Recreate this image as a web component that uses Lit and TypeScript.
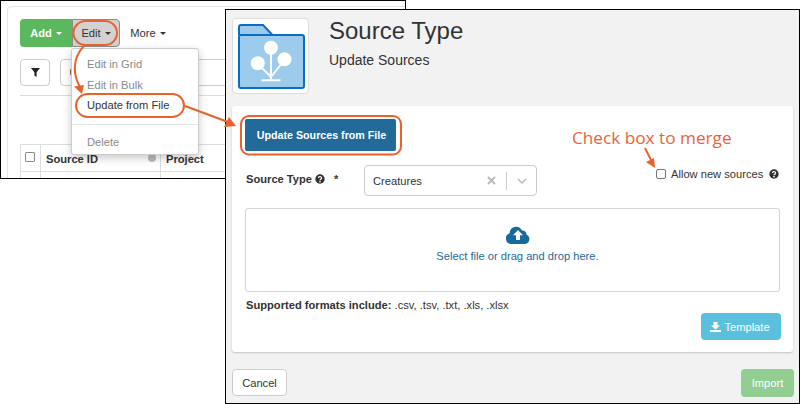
import { LitElement, html, css, svg } from "lit";
import { customElement } from "lit/decorators.js";

const caret = html`<span class="caret"></span>`;
const qmark = html`<svg class="q" viewBox="0 0 12 12"><circle cx="6" cy="6" r="5.6" fill="#2f2f2f"/><path d="M4.1 4.8a1.9 1.7 0 1 1 2.9 1.4c-.7.4-1 .6-1 1.4" fill="none" stroke="#fff" stroke-width="1.5"/><rect x="5.1" y="8.4" width="1.8" height="1.6" fill="#fff"/></svg>`;

@customElement("app-root")
export class AppRoot extends LitElement {
  static styles = css`
    :host { display: block; position: relative; width: 800px; height: 404px; overflow: hidden; background: #fff;
      font-family: "Liberation Sans", Arial, sans-serif; font-size: 11.15px; color: #333; }
    * { box-sizing: border-box; }
    .win { position: absolute; border: 1px solid #000; overflow: hidden; }
    .back { left: 0; top: 0; width: 406px; height: 179px; background: #fff; padding: 5px 0 0 6px; }
    .bcard { width: 420px; height: 190px; border: 1px solid #e4e4e4; border-radius: 4px; padding: 12px 12px 0 12px; background: #fff; }
    .toolbar { display: flex; align-items: stretch; height: 28px; }
    .btn { display: flex; align-items: center; justify-content: center; gap: 4px; border-radius: 4px; font-weight: 400; }
    .add { width: 52px; background: #5cb85c; color: #fff; font-weight: 700; border-radius: 4px 0 0 4px; }
    .edit { width: 48px; background: #d2d2d2; border: 1px solid #8c8c8c; border-radius: 0 4px 4px 0; color: #333; }
    .more { width: 54px; margin-left: 1px; color: #333; }
    .caret { display: inline-block; width: 0; height: 0; border-left: 3.5px solid transparent; border-right: 3.5px solid transparent; border-top: 3.5px solid currentColor; }
    .filters { display: flex; gap: 10px; margin-top: 12px; }
    .fbtn { width: 30px; height: 27px; border: 1px solid #ccc; border-radius: 4px; display: flex; align-items: center; justify-content: center; }
    .search { width: 340px; height: 27px; border: 1px solid #ccc; border-radius: 4px 0 0 4px; padding: 8px 0 0 9px; }
    .search span { display: block; width: 4px; height: 8px; border: 1.5px solid #7a5a3a; border-radius: 50%; }
    .rule { height: 1px; background: #ddd; margin-top: 9px; width: 390px; }
    .tbl { margin-top: 48px; display: grid; grid-template-columns: 20px 120px 120px; border-top: 1px solid #ddd; border-left: 1px solid #ddd; width: 400px; }
    .th { height: 27px; border-right: 1px solid #ddd; border-bottom: 1px solid #ddd; font-weight: 700; display: flex; align-items: center; padding-left: 5px; padding-top: 2px; font-size: 11.15px; color: #333; position: relative; }
    .th.c { padding-left: 4px; padding-top: 0; padding-bottom: 2px; }
    .cb { width: 10px; height: 10px; border: 1px solid #8a8a8a; border-radius: 1px; background: #fff; }
    .th .dot { position: absolute; right: 4px; top: 9px; width: 8px; height: 8px; border-radius: 50%; background: #bbb; }
    .td { height: 10px; border-right: 1px solid #ddd; }
    .menu { position: absolute; left: 71px; top: 48px; width: 128px; height: 107px; background: #fff; border: 1px solid #ccc; border-radius: 3px;
      box-shadow: 0 3px 8px rgba(0,0,0,.22); padding-top: 5px; }
    .mi { height: 20.5px; line-height: 20.5px; padding-left: 15px; color: #8a8a8a; }
    .mi.on { color: #333; }
    .sep { height: 1px; background: #e5e5e5; margin: 8px 0 7px; }

    .front { left: 225px; top: 9px; width: 575px; height: 395px; background: #f2f2f2; display: flex; flex-direction: column; padding: 8px 6px 0 6px; }
    .head { display: flex; height: 76px; }
    .logo { width: 77px; height: 76px; background: #fff; border: 1px solid #ddd; border-radius: 4px; display: flex; align-items: center; justify-content: center; }
    .titles { margin-left: 20px; margin-top: -1px; }
    h1 { margin: 0; font-weight: 400; font-size: 24px; line-height: 28px; color: #333; }
    .sub { font-size: 14px; line-height: 16px; margin-top: 7px; color: #333; }
    .card { margin-top: 12px; width: 561px; height: 246px; background: #fff; border-radius: 3px; box-shadow: 0 1px 2px rgba(0,0,0,.2); padding: 13px 13px 0 13px; position: relative; }
    .update { width: 151px; height: 32px; padding-left: 2px; background: #226a97; color: #fff; font-weight: 700; font-size: 10.7px; display: flex; align-items: center; justify-content: center; border-radius: 2px; }
    .row { display: flex; align-items: center; margin-top: 14px; height: 31px; }
    .lbl { width: 119px; padding-left: 1px; font-weight: 700; display: flex; align-items: center; gap: 3px; margin-top: -3px; }
    .q { width: 10px; height: 10px; }
    .star { margin-left: 6px; }
    .select { width: 173px; height: 31px; border: 1px solid #ccc; border-radius: 4px; display: flex; align-items: center; padding-left: 8px; }
    .select .v { flex: 1; }
    .x { margin-right: 10px; width: 9px; height: 9px; }
    .bar { width: 1px; height: 18px; background: #ccc; }
    .chev { width: 10px; height: 6px; margin: 0 9px 0 10px; }
    .allow { position: absolute; left: 424px; top: 62px; display: flex; align-items: center; }
    .allow .box { width: 10px; height: 10px; border: 1px solid #777; border-radius: 2px; background: #fff; margin-right: 5px; }
    .allow .q { margin-left: 6px; }
    .drop { margin-top: 12px; height: 84px; width: 535px; border: 1px solid #d4d4d4; border-radius: 3px; display: flex; flex-direction: column; align-items: center; padding: 17px 0 0 10px; color: #226a97; }
    .drop svg { width: 24px; height: 18px; }
    .drop div { margin-top: 6px; }
    .formats { margin-top: 7px; padding-left: 1px; }
    .tpl { position: absolute; right: 12px; top: 207px; width: 80px; height: 27px; background: #5bc0de; color: #fff; border-radius: 4px; display: flex; align-items: center; justify-content: center; gap: 3px; padding-right: 2px; }
    .foot { display: flex; justify-content: space-between; margin-top: 17px; width: 562px; }
    .cancel { width: 55px; height: 27px; border: 1px solid #ccc; border-radius: 4px; background: #fff; }
    .import { width: 53px; height: 28px; background: #92cd92; color: #fff; border-radius: 4px; }
    .ann { position: absolute; left: 0; top: 0; pointer-events: none; }
    .note { position: absolute; left: 572px; top: 126px; font-family: "Open Sans", sans-serif; font-size: 17.2px; line-height: 24px; color: #e8643a; white-space: nowrap; }
  `;

  render() {
    const o = "#e8622c";
    return html`
      <div class="win back">
        <div class="bcard">
          <div class="toolbar">
            <div class="btn add">Add ${caret}</div>
            <div class="btn edit">Edit ${caret}</div>
            <div class="btn more">More ${caret}</div>
          </div>
          <div class="filters">
            <div class="fbtn"><svg width="9" height="9" viewBox="0 0 9 9"><path d="M0 0h9L5.6 4.2V9L3.4 7.4V4.2z" fill="#222"/></svg></div>
            <div class="search"><span></span></div>
          </div>
          <div class="rule"></div>
          <div class="tbl">
            <div class="th c"><span class="cb"></span></div>
            <div class="th">Source ID<span class="dot"></span></div>
            <div class="th">Project</div>
            <div class="td"></div><div class="td"></div><div class="td"></div>
          </div>
        </div>
      </div>
      <div class="menu">
        <div class="mi">Edit in Grid</div>
        <div class="mi">Edit in Bulk</div>
        <div class="mi on">Update from File</div>
        <div class="sep"></div>
        <div class="mi">Delete</div>
      </div>
      <div class="win front">
        <div class="head">
          <div class="logo">
            <svg width="70" height="70" viewBox="0 0 70 70">
              <path d="M3 14V6a2 2 0 0 1 2-2h22l9 9.5" fill="#9ccbec" stroke="#0a6cc4" stroke-width="2"/>
              <rect x="3" y="14" width="65" height="53" rx="2" fill="#9ccbec" stroke="#0a6cc4" stroke-width="2"/>
              <g stroke="#fff" stroke-width="2" fill="none"><path d="M35 58V30M35 56 22 43M35 56 48.5 39"/></g>
              <rect x="25.5" y="58.300" width="19" height="2" fill="#fff"/>
              <circle cx="35" cy="26.700" r="7" fill="#fff"/><circle cx="21.800" cy="42.300" r="7" fill="#fff"/><circle cx="48.500" cy="38.300" r="7" fill="#fff"/>
            </svg>
          </div>
          <div class="titles">
            <h1>Source Type</h1>
            <div class="sub">Update Sources</div>
          </div>
        </div>
        <div class="card">
          <div class="update">Update Sources from File</div>
          <div class="row">
            <div class="lbl">Source Type ${qmark}<span class="star">*</span></div>
            <div class="select"><span class="v">Creatures</span>
              <svg class="x" viewBox="0 0 9 9"><path d="M1 1l7 7M8 1 1 8" stroke="#b8b8b8" stroke-width="1.8"/></svg>
              <span class="bar"></span>
              <svg class="chev" viewBox="0 0 10 6"><path d="M1 1l4 4 4-4" fill="none" stroke="#b8b8b8" stroke-width="1.4"/></svg>
            </div>
          </div>
          <div class="allow"><span class="box"></span>Allow new sources ${qmark}</div>
          <div class="drop">
            <svg viewBox="0 0 24 18"><path d="M5.500 18A5.500 5.500 0 0 1 3.600 7.300 6.500 6.500 0 0 1 16 4.500 4 4 0 0 1 20.500 8.500 5 5 0 0 1 19 18z" fill="#176a9c"/><path d="M12 4 7 9.300h3V14h4V9.300h3z" fill="#fff"/></svg>
            <div>Select file or drag and drop here.</div>
          </div>
          <div class="formats"><b>Supported formats include:</b> .csv, .tsv, .txt, .xls, .xlsx</div>
          <div class="tpl"><svg width="11" height="10" viewBox="0 0 11 10"><path d="M3.500 0h4v3.500H10L5.500 7.500 1 3.500h2.500zM0 8h11v2H0z" fill="#fff"/></svg>Template</div>
        </div>
        <div class="foot">
          <div class="btn cancel">Cancel</div>
          <div class="btn import">Import</div>
        </div>
      </div>
      <div class="note">Check box to merge</div>
      <svg class="ann" width="800" height="404" fill="none" stroke="${o}" stroke-width="2">
        ${svg`
        <rect x="73.500" y="21" width="43.500" height="24" rx="12"/>
        <rect x="76" y="94" width="108" height="23" rx="11.500"/>
        <rect x="241" y="116" width="160" height="38.500" rx="8"/>
        <path d="M84 46C72 58 73 75 80 87"/>
        <path d="M74 86.500 L82 94 L84 85z" fill="${o}" stroke="none"/>
        <path d="M185 106 L228 122"/>
        <path d="M236 126 L224 127 L229 117z" fill="${o}" stroke="none"/>
        <path d="M645 148 L651 160"/>
        <path d="M655 168 L646 162 L654 158z" fill="${o}" stroke="none"/>
        `}
      </svg>
    `;
  }
}
